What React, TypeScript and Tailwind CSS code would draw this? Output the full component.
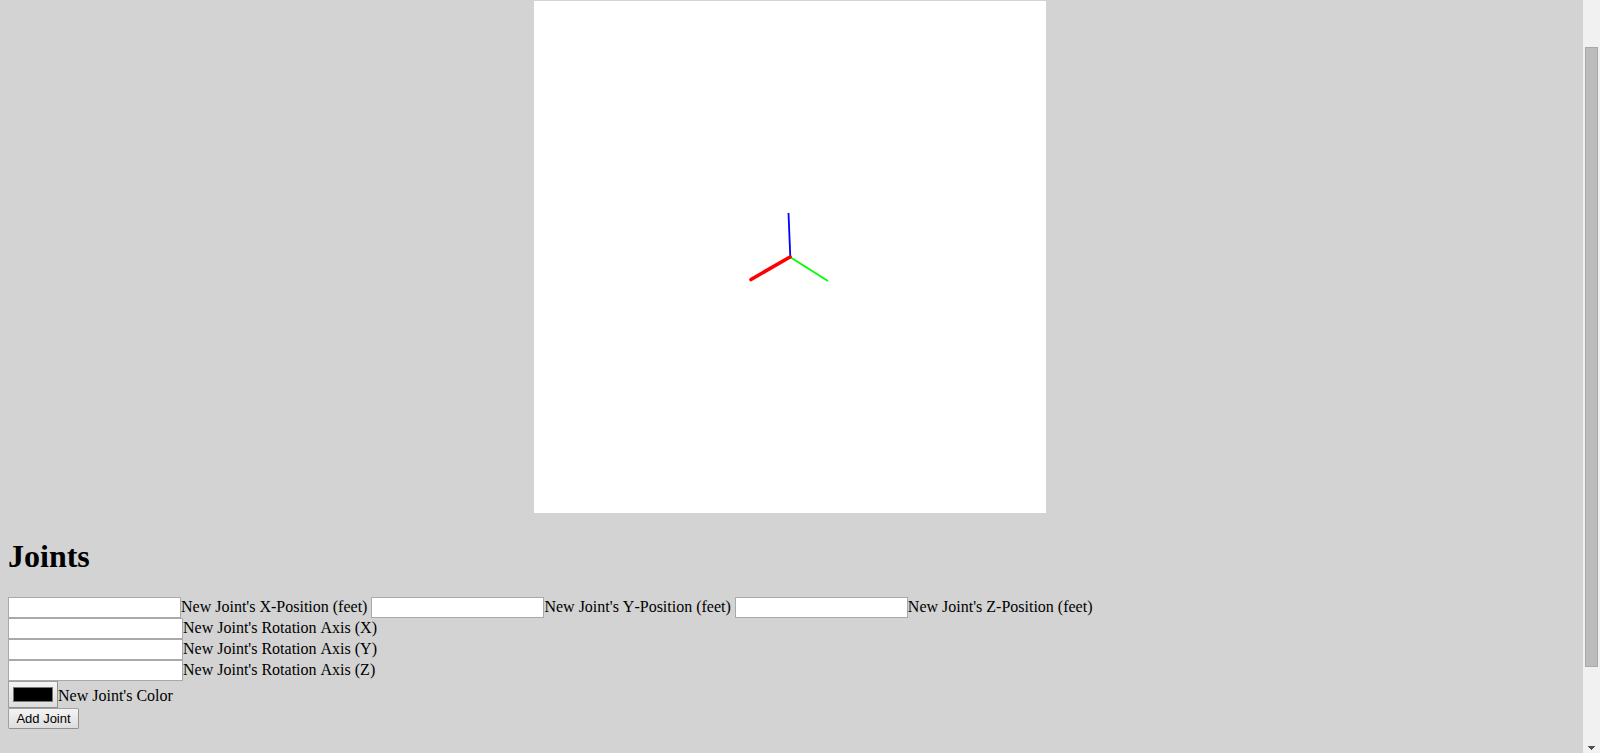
import { useId } from "react";

type FieldProps = { label: string; type: "text" | "number" };

function Field({ label, type }: FieldProps) {
  const id = useId();
  const width = type === "text" ? "w-[173px]" : "w-[175px]";
  return (
    <div className="flex items-start">
      <input
        id={id}
        type={type}
        className={`${width} h-[21px] border border-[#a9a9a9] bg-white px-0.5 text-[13px] outline-none [appearance:textfield]`}
      />
      <label htmlFor={id} className="leading-[19px]">{label}</label>
    </div>
  );
}

function AxesView() {
  return (
    <svg viewBox="0 0 512 512" className="size-[512px] bg-white" role="img" aria-label="Joint axes">
      <line x1="256" y1="256" x2="294" y2="280" stroke="#00ff00" strokeWidth="1.8" />
      <line x1="254.5" y1="212" x2="256.3" y2="256" stroke="#0000ff" strokeWidth="1.8" />
      <line x1="217" y1="278.5" x2="256" y2="256" stroke="#ff0000" strokeWidth="3.6" strokeLinecap="round" />
    </svg>
  );
}

function ScrollTrack() {
  return (
    <div className="flex w-[17px] shrink-0 flex-col bg-[#f1f1f1] px-0.5" aria-hidden="true">
      <div className="grow-[47] basis-0" />
      <div className="grow-[620] basis-0 border border-[#a8a8a8] bg-[#bcbcbc]" />
      <div className="flex grow-[83] basis-0 items-end justify-center pb-[3px]">
        <svg viewBox="0 0 7 4" className="h-1 w-[7px]" shapeRendering="crispEdges">
          <path d="M0 0h7v1h-1v1h-1v1h-1v1h-1v-1h-1v-1h-1v-1h-1z" fill="#505050" />
        </svg>
      </div>
    </div>
  );
}

export default function App() {
  return (
    <div className="flex min-h-screen bg-[#d3d3d3] font-['Liberation_Serif',serif] text-base text-black [font-kerning:none]">
      <main className="min-w-0 grow px-2 pt-px">
        <div className="flex justify-center pr-[3px]">
          <AxesView />
        </div>
        <h1 className="mt-[25px] mb-[22px] text-[32px] leading-[37px] font-bold">Joints</h1>
        <form onSubmit={(e) => e.preventDefault()}>
          <div className="flex flex-wrap gap-x-1">
            <Field type="text" label="New Joint's X-Position (feet)" />
            <Field type="text" label="New Joint's Y-Position (feet)" />
            <Field type="text" label="New Joint's Z-Position (feet)" />
          </div>
          <Field type="number" label="New Joint's Rotation Axis (X)" />
          <Field type="number" label="New Joint's Rotation Axis (Y)" />
          <Field type="number" label="New Joint's Rotation Axis (Z)" />
          <div className="flex items-center">
            <input
              id="joint-color"
              type="color"
              defaultValue="#000000"
              className="h-[27px] w-[50px] appearance-none rounded-none border border-[#a0a0a0] border-r-[#909090] border-b-[#909090] bg-linear-to-b from-[#f4f4f4] to-[#dddddd] px-1 py-[5px] [&::-webkit-color-swatch]:rounded-none [&::-webkit-color-swatch]:border [&::-webkit-color-swatch]:border-[#777777] [&::-webkit-color-swatch-wrapper]:p-0"
            />
            <label htmlFor="joint-color" className="pt-0.5 leading-[21px]">New Joint's Color</label>
          </div>
          <button
            type="submit"
            className="block h-[21px] w-[71px] rounded-xs border border-[#a0a0a0] border-r-[#909090] border-b-[#909090] bg-linear-to-b from-[#f4f4f4] to-[#dddddd] font-['Liberation_Sans',sans-serif] text-[13px] leading-[19px] whitespace-nowrap"
          >
            Add Joint
          </button>
        </form>
      </main>
      <ScrollTrack />
    </div>
  );
}
